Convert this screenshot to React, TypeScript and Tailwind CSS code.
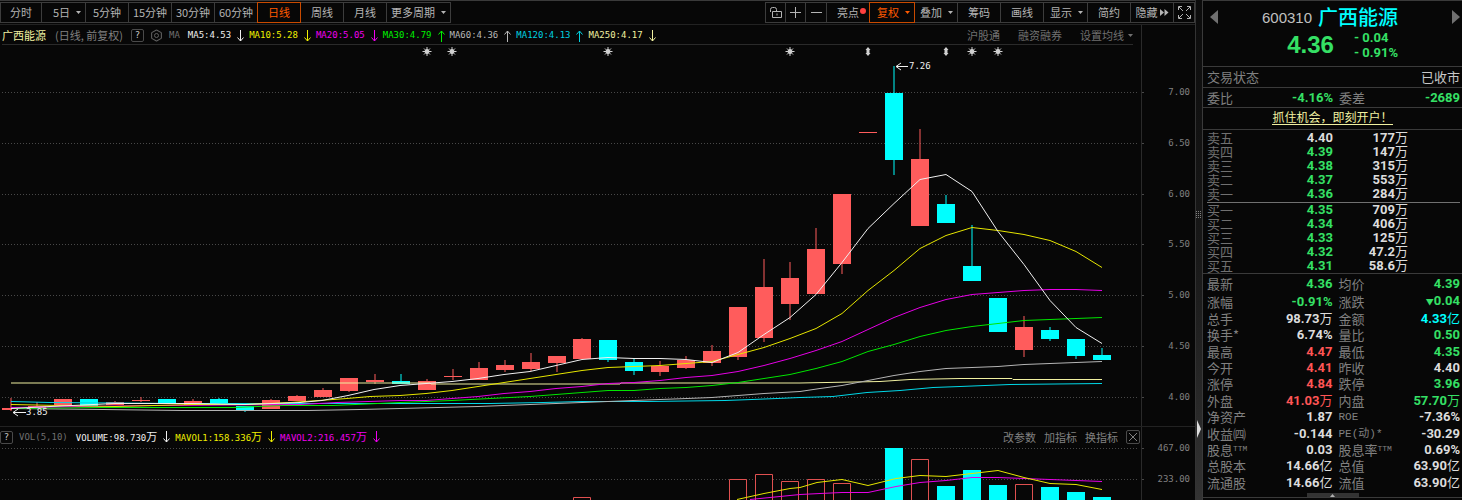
import React from 'react';
import { Hexagon } from 'lucide-react';

type Dir = 'up' | 'down';
type Candle = { d: Dir; top: number; bottom: number; high?: number; low?: number; vol?: number };
type Tone = 'g' | 'r' | 'w' | 'c';

const BODY = 18;
const cx = (i: number) => Math.round(11 + i * (1091 / 42));

const RED = '#ff5c5c';
const CYAN = '#00ffff';

const CANDLES: Candle[] = [
  { d: 'up', top: 408, bottom: 410, high: 398, low: 411 },
  { d: 'up', top: 406, bottom: 408, high: 402 },
  { d: 'up', top: 399, bottom: 405 },
  { d: 'down', top: 399, bottom: 406 },
  { d: 'up', top: 402, bottom: 405, high: 401 },
  { d: 'up', top: 400, bottom: 401, high: 397, low: 402 },
  { d: 'down', top: 399, bottom: 403 },
  { d: 'up', top: 401, bottom: 405, high: 399 },
  { d: 'down', top: 399, bottom: 403, high: 398 },
  { d: 'down', top: 406, bottom: 410, low: 412 },
  { d: 'up', top: 400, bottom: 409, high: 399 },
  { d: 'up', top: 396, bottom: 401, high: 395 },
  { d: 'up', top: 390, bottom: 397, high: 388 },
  { d: 'up', top: 378, bottom: 391, low: 392 },
  { d: 'up', top: 380, bottom: 382, high: 374, low: 384 },
  { d: 'down', top: 381, bottom: 384, high: 374 },
  { d: 'up', top: 381, bottom: 390, high: 379 },
  { d: 'up', top: 376, bottom: 377, high: 369, low: 380 },
  { d: 'up', top: 368, bottom: 380, high: 362 },
  { d: 'up', top: 365, bottom: 370, high: 360, low: 372 },
  { d: 'up', top: 362, bottom: 369, high: 353, low: 371 },
  { d: 'up', top: 356, bottom: 363, low: 372 },
  { d: 'up', top: 339, bottom: 359, high: 338, vol: 497 },
  { d: 'down', top: 340, bottom: 360, low: 362 },
  { d: 'down', top: 362, bottom: 371, high: 358, low: 375 },
  { d: 'up', top: 366, bottom: 372, high: 361, low: 376 },
  { d: 'up', top: 360, bottom: 368, high: 356, low: 369 },
  { d: 'up', top: 351, bottom: 363, high: 345, low: 366 },
  { d: 'up', top: 307, bottom: 357, low: 360, vol: 479 },
  { d: 'up', top: 287, bottom: 338, high: 259, low: 342, vol: 474 },
  { d: 'up', top: 278, bottom: 304, high: 262, low: 320, vol: 481 },
  { d: 'up', top: 249, bottom: 294, high: 228, vol: 479 },
  { d: 'up', top: 194, bottom: 264, low: 274, vol: 483 },
  { d: 'up', top: 132, bottom: 133 },
  { d: 'down', top: 93, bottom: 160, high: 66, low: 175, vol: 448 },
  { d: 'up', top: 159, bottom: 226, high: 129, vol: 459 },
  { d: 'down', top: 204, bottom: 223, high: 195, vol: 486 },
  { d: 'down', top: 266, bottom: 281, high: 225, vol: 470 },
  { d: 'down', top: 298, bottom: 332, vol: 485 },
  { d: 'up', top: 327, bottom: 350, high: 316, low: 357, vol: 484 },
  { d: 'down', top: 330, bottom: 339, high: 327, low: 341, vol: 487 },
  { d: 'down', top: 339, bottom: 356, low: 359, vol: 492 },
  { d: 'down', top: 355, bottom: 360, high: 348, vol: 497 },
];

const MA_LINES = [
  { color: '#f0f0a0', points: '11,382.5 430,382.5 431,383.5 620,383.5 621,382.5 800,382.5 880,381 910,379 960,378 1012,378 1013,379 1102,379' },
  { color: '#00d8e8', points: '11,401 50,402 180,403 400,403 490,403 543,402 582,401 647,401 725,400 752,399 777,398 800,397 833,396 867,392 900,390 933,387 960,386 1010,384 1102,383' },
  { color: '#b4b4b4', points: '11,408 103,409 182,410 308,410 360,409 400,408 438,407 478,406 530,404 582,402 608,401 633,400 687,398 712,397 738,395 764,393 800,391 820,388 842,385 868,380 894,375 920,371 946,368 972,367 998,366 1024,364 1050,363 1076,362 1102,361' },
  { color: '#00e600', points: '11,408 100,407 160,407 233,407 283,405 333,405 400,402 452,400 490,398 530,396 556,394 582,392 608,390 634,390 660,388 686,387 712,385 738,382 764,378 790,374 816,368 842,361 868,351 894,344 920,336 946,330 972,326 998,323 1024,320 1050,319 1076,318 1102,317' },
  { color: '#e600e6', points: '11,407 80,406 160,405 300,404 337,402 400,400 426,400 452,398 478,396 504,393 530,391 556,388 582,386 608,383 634,382 660,380 686,377 712,375 738,371 764,365 790,358 816,350 842,341 868,329 894,317 920,307 946,299 972,294 998,292 1024,290 1050,289 1076,289 1102,290' },
  { color: '#e6e600', points: '11,404 60,405 115,406 192,404 245,404 290,402 333,399 347,398 370,396 400,395 426,393 452,390 478,386 504,382 530,378 556,374 582,370 608,367 634,366 660,365 686,363 712,361 738,354 764,347 790,338 816,328 842,313 868,290 894,270 920,248 946,235 972,227 998,230 1024,234 1050,240 1076,251 1102,267' },
  { color: '#f0f0f0', points: '11,408 50,406 115,403 192,403 245,404 300,402 322,400 348,395 374,389 400,385 426,383 452,381 478,378 504,374 530,371 556,365 582,359 608,357 634,358 660,358 686,359 712,362 738,352 764,334 790,317 816,294 842,262 868,228 894,203 920,179 946,174 972,191 998,231 1024,264 1050,300 1076,327 1102,343' },
];

const VOL_LINES = [
  { color: '#e600e6', points: '750,499 800,494 820,493 842,492 868,492 896,486 920,482 946,480 972,477 998,477 1050,479 1076,480 1102,481' },
  { color: '#e6e600', points: '737,499 764,493 790,488 800,487 817,482 842,479 868,485 896,478 920,475 946,476 972,473 998,470 1024,477 1050,483 1076,484 1102,489' },
];

const PRICE_GRID: [string, number][] = [
  ['7.00', 92], ['6.50', 143], ['6.00', 194], ['5.50', 244], ['5.00', 295], ['4.50', 346], ['4.00', 397],
];
const VOL_GRID: [string, number][] = [['467.00', 448], ['233.00', 479]];

const STARS = [427, 452, 608, 790, 972, 998];
const DIAMONDS = [868, 946];

const PERIODS = [
  { label: '分时', w: 'w-[42px]' },
  { label: '5日', w: 'w-[45px]', caret: true },
  { label: '5分钟', w: 'w-11' },
  { label: '15分钟', w: 'w-11' },
  { label: '30分钟', w: 'w-11' },
  { label: '60分钟', w: 'w-11' },
  { label: '日线', w: 'w-11', active: true },
  { label: '周线', w: 'w-11' },
  { label: '月线', w: 'w-11' },
  { label: '更多周期', w: 'w-[65px]', caret: true },
];

const AVERAGES: { label: string; color: string; up?: boolean }[] = [
  { label: 'MA5:4.53', color: 'text-[#f0f0f0]' },
  { label: 'MA10:5.28', color: 'text-[#f0f000]' },
  { label: 'MA20:5.05', color: 'text-[#f000f0]' },
  { label: 'MA30:4.79', color: 'text-[#00f000]', up: true },
  { label: 'MA60:4.36', color: 'text-[#b8b8b8]', up: true },
  { label: 'MA120:4.13', color: 'text-[#00d0e0]', up: true },
  { label: 'MA250:4.17', color: 'text-[#f0f0a0]' },
];

const SELLS: [string, string, string, Tone][] = [
  ['卖五', '4.40', '177', 'w'],
  ['卖四', '4.39', '147', 'g'],
  ['卖三', '4.38', '315', 'g'],
  ['卖二', '4.37', '553', 'g'],
  ['卖一', '4.36', '284', 'g'],
];
const BUYS: [string, string, string, Tone][] = [
  ['买一', '4.35', '709', 'g'],
  ['买二', '4.34', '406', 'g'],
  ['买三', '4.33', '125', 'g'],
  ['买四', '4.32', '47.2', 'g'],
  ['买五', '4.31', '58.6', 'g'],
];

type Stat = { label: string; value: string; unit?: string; tone: Tone; sup?: string; latin?: boolean; falling?: boolean };
const STATS: [Stat, Stat][] = [
  [{ label: '最新', value: '4.36', tone: 'g' }, { label: '均价', value: '4.39', tone: 'g' }],
  [{ label: '涨幅', value: '-0.91%', tone: 'g' }, { label: '涨跌', value: '0.04', tone: 'g', falling: true }],
  [{ label: '总手', value: '98.73', unit: '万', tone: 'w' }, { label: '金额', value: '4.33', unit: '亿', tone: 'c' }],
  [{ label: '换手*', value: '6.74%', tone: 'w' }, { label: '量比', value: '0.50', tone: 'g' }],
  [{ label: '最高', value: '4.47', tone: 'r' }, { label: '最低', value: '4.35', tone: 'g' }],
  [{ label: '今开', value: '4.41', tone: 'r' }, { label: '昨收', value: '4.40', tone: 'w' }],
  [{ label: '涨停', value: '4.84', tone: 'r' }, { label: '跌停', value: '3.96', tone: 'g' }],
  [{ label: '外盘', value: '41.03', unit: '万', tone: 'r' }, { label: '内盘', value: '57.70', unit: '万', tone: 'g' }],
  [{ label: '净资产', value: '1.87', tone: 'w' }, { label: 'ROE', value: '-7.36%', tone: 'w', latin: true }],
  [{ label: '收益㈣', value: '-0.144', tone: 'w' }, { label: 'PE(动)*', value: '-30.29', tone: 'w', latin: true }],
  [{ label: '股息', sup: 'TTM', value: '0.03', tone: 'w' }, { label: '股息率', sup: 'TTM', value: '0.69%', tone: 'w' }],
  [{ label: '总股本', value: '14.66', unit: '亿', tone: 'w' }, { label: '总值', value: '63.90', unit: '亿', tone: 'w' }],
  [{ label: '流通股', value: '14.66', unit: '亿', tone: 'w' }, { label: '流值', value: '63.90', unit: '亿', tone: 'w' }],
];

const TONES: Record<Tone, string> = {
  g: 'text-[#35e065]',
  r: 'text-[#ff5555]',
  w: 'text-[#dcdcdc]',
  c: 'text-[#00ffff]',
};

const MONO = "font-['DejaVu_Sans_Mono','Noto_Sans_CJK_SC',monospace]";
const NUM = "font-['Roboto','Noto_Sans_CJK_SC',sans-serif] font-bold";

const Caret = () => (
  <svg viewBox="0 0 5 3" className="w-[5px] h-[3px] shrink-0" fill="currentColor"><path d="M0 0h5L2.5 3z" /></svg>
);

const Arrow: React.FC<{ up?: boolean }> = ({ up }) => (
  <svg viewBox="0 0 7 12" className={`w-[7px] h-3 shrink-0 ${up ? '' : 'rotate-180'}`} fill="none" stroke="currentColor">
    <path d="M3.5 12V1M.5 4.5l3-3.5 3 3.5" />
  </svg>
);

const ToolButton: React.FC<{
  w: string;
  label?: string;
  active?: boolean;
  caret?: boolean;
  children?: React.ReactNode;
}> = ({ w, label, active, caret, children }) => (
  <button
    className={`${w} h-[21px] -ml-px first:ml-0 shrink-0 relative flex items-center border whitespace-nowrap ${caret ? 'justify-end gap-1.5 pr-1' : 'justify-center'} ${active ? 'z-10 border-[#c84a00] text-[#ff5a00]' : 'border-[#3c3c3c] text-[#b4b4b4]'}`}
  >
    {label}
    {children}
    {caret && <Caret />}
  </button>
);

const HelpButton = () => (
  <button className={`w-[13px] h-[13px] shrink-0 flex items-center justify-center rounded-xs border border-[#4a4a4a] text-[#c8c8c8] text-[9px] ${MONO}`}>
    ?
  </button>
);

const Toolbar = () => (
  <div className="h-[25px] pt-px flex justify-between border-t border-b border-t-[#3a3a3a] border-b-[#222]">
    <div className="flex">
      {PERIODS.map((p) => (
        <ToolButton key={p.label} {...p} />
      ))}
    </div>
    <div className="flex">
      <ToolButton w="w-[21px]">
        <svg viewBox="0 0 14 13" className="w-3.5 h-[13px]" fill="none" stroke="currentColor">
          <path d="M3.5 11.5h9v-6h-9zM1.5 6V3.5q0-2 2-2h2q2 0 2 2v2M8 7.5v2" />
        </svg>
      </ToolButton>
      <ToolButton w="w-[21px]">
        <svg viewBox="0 0 11 11" className="w-[11px] h-[11px]" stroke="currentColor"><path d="M0 5.5h11M5.5 0v11" /></svg>
      </ToolButton>
      <ToolButton w="w-[22px]">
        <svg viewBox="0 0 11 11" className="w-[11px] h-[11px]" stroke="currentColor"><path d="M0 5.5h11" /></svg>
      </ToolButton>
      <ToolButton w="w-11" label="亮点">
        <span className="absolute right-[3px] top-[5px] w-1.5 h-1.5 rounded-full bg-[#ff4040]" />
      </ToolButton>
      <ToolButton w="w-[46px]" label="复权" active caret />
      <ToolButton w="w-11" label="叠加" caret />
      <ToolButton w="w-11" label="筹码" />
      <ToolButton w="w-11" label="画线" />
      <ToolButton w="w-[45px]" label="显示" caret />
      <ToolButton w="w-11" label="简约" />
      <ToolButton w="w-11" label="隐藏">
        <svg viewBox="0 0 9 7" className="ml-0.5 w-[9px] h-[7px]" fill="currentColor"><path d="M0 0l4 3.5L0 7zM4.5 0l4 3.5-4 3.5z" /></svg>
      </ToolButton>
      <ToolButton w="w-[22px]">
        <svg viewBox="0 0 13 13" className="w-[13px] h-[13px]" fill="none" stroke="currentColor">
          <path d="M.5 4V.5H4M9 .5h3.5V4M12.5 9v3.5H9M4 12.5H.5V9M1 1l4 4M12 1L8 5M12 12L8 8M1 12l4-4" />
        </svg>
      </ToolButton>
    </div>
  </div>
);

const IndicatorBar = () => (
  <div className="flex h-5">
    <div className="flex-1 pl-0.5 pr-2 border-r border-[#2a2a2a]">
      <div className="h-5 pt-0.5 flex items-center border-b border-[#2a2a2a] whitespace-nowrap">
        <span className="text-[#f0f0a0]">广西能源</span>
        <span className="ml-[9px] text-[#808080]">(日线, 前复权)</span>
        <span className="ml-2 flex items-center gap-1.5">
          <HelpButton />
          <button aria-label="设置" className="relative w-[13px] h-[13px] flex items-center justify-center text-[#606060]">
            <Hexagon className="w-[13px] h-[13px]" strokeWidth={2} />
            <span className="absolute w-[5px] h-[5px] rounded-full border border-[#606060]" />
          </button>
          <span className={`text-[9px] text-[#707070] ${MONO}`}>MA</span>
        </span>
        <span className={`ml-2 flex items-center gap-[5px] text-[9px] ${MONO}`}>
          {AVERAGES.map((m) => (
            <span key={m.label} className={`flex items-center gap-1.5 ${m.color}`}>
              {m.label}
              <Arrow up={m.up} />
            </span>
          ))}
        </span>
        <span className="ml-auto flex items-center gap-[18px] text-[#707070]">
          <a href="#hgt">沪股通</a>
          <a href="#rzrq">融资融券</a>
          <button className="flex items-center gap-1">设置均线 <Caret /></button>
        </span>
      </div>
    </div>
    <div className="w-[53px]" />
  </div>
);

const Grid: React.FC<{ rows: [string, number][] }> = ({ rows }) => (
  <>
    {rows.map(([label, y]) => (
      <g key={label}>
        <path d={`M2 ${y + 0.5}H1137`} stroke="#484848" strokeDasharray="1 2" />
        <path d={`M1141 ${y + 0.5}h3`} stroke="#484848" />
        <text x="1190" y={y + 3} textAnchor="end" fill="#808080" className={`text-[9px] ${MONO}`}>{label}</text>
      </g>
    ))}
  </>
);

const PriceChart = () => (
  <svg viewBox="0 45 1195 381" className="block w-full h-auto" fill="none">
    <Grid rows={PRICE_GRID} />
    <path d="M1141.5 45v381" stroke="#2a2a2a" />
    {STARS.map((x) => (
      <g key={x} stroke="#d0d0d0">
        <path d={`M${x} 47v9M${x - 4.5} 51.5h9M${x - 3} 48.5l6 6M${x + 3} 48.5l-6 6`} />
        <circle cx={x} cy="51.5" r="2" fill="#d0d0d0" />
      </g>
    ))}
    {DIAMONDS.map((x) => (
      <path key={x} d={`M${x} 47l2.5 3h-1v3h1l-2.5 3-2.5-3h1v-3h-1z`} fill="#d0d0d0" />
    ))}
    {CANDLES.map((c, i) => {
      const x = cx(i);
      const high = c.high ?? c.top;
      const low = c.low ?? c.bottom;
      return (
        <g key={i} fill={c.d === 'up' ? RED : CYAN}>
          <rect x={x - BODY / 2} y={c.top} width={i === 0 ? 10 : BODY} height={c.bottom - c.top} />
          <rect x={x - 0.5} y={high} width="1" height={low - high} />
        </g>
      );
    })}
    {MA_LINES.map((l) => (
      <polyline key={l.color} points={l.points} stroke={l.color} transform="translate(0 .5)" />
    ))}
    <path d="M908 66.5H896M901 63l-5 3.5 5 3.5" stroke="#f0f0f0" />
    <text x="909" y="69" fill="#f0f0f0" className={`text-[9px] ${MONO}`}>7.26</text>
    <path d="M26 412.5H13M18 409l-5 3.5 5 3.5" stroke="#f0f0f0" />
    <text x="26" y="415" fill="#f0f0f0" className={`text-[9px] ${MONO}`}>3.85</text>
  </svg>
);

const VolumeHeader = () => (
  <div className="flex h-5 border-t border-[#222]">
    <div className="flex-1 flex items-center pt-px pr-px border-r border-[#2a2a2a] whitespace-nowrap">
      <HelpButton />
      <span className={`ml-1.5 flex items-center text-[9px] ${MONO}`}>
        <span className="text-[#707070]">VOL(5,10)</span>
        <span className="ml-2 flex items-center gap-[5px]">
          <span className="flex items-center gap-1.5 text-[#f0f0f0]">
            <span>VOLUME:98.730<span className="text-[11px]">万</span></span>
            <Arrow />
          </span>
          <span className="flex items-center gap-1.5 text-[#f0f000]">
            <span>MAVOL1:158.336<span className="text-[11px]">万</span></span>
            <Arrow />
          </span>
          <span className="flex items-center gap-1.5 text-[#f000f0]">
            <span>MAVOL2:216.457<span className="text-[11px]">万</span></span>
            <Arrow />
          </span>
        </span>
      </span>
      <span className="ml-auto flex items-center gap-2 text-[#808080]">
        <button>改参数</button>
        <button>加指标</button>
        <button>换指标</button>
        <button aria-label="关闭" className="w-3.5 h-3.5 flex items-center justify-center rounded-xs border border-[#4a4a4a]">
          <svg viewBox="0 0 8 8" className="w-2 h-2" stroke="currentColor"><path d="M0 0l8 8M8 0L0 8" /></svg>
        </button>
      </span>
    </div>
    <div className="w-[53px]" />
  </div>
);

const VolumeChart = () => (
  <svg viewBox="0 446 1195 54" className="block w-full h-auto overflow-visible" fill="none">
    <Grid rows={VOL_GRID} />
    <path d="M1141.5 446v54" stroke="#2a2a2a" />
    {CANDLES.map((c, i) => {
      if (!c.vol) return null;
      const x = cx(i) - BODY / 2;
      return c.d === 'up' ? (
        <path key={i} d={`M${x + 0.5} 500V${c.vol + 0.5}h17V500`} stroke="#e05050" fill="#070707" />
      ) : (
        <rect key={i} x={x} y={c.vol} width={BODY} height={500 - c.vol} fill={CYAN} />
      );
    })}
    {VOL_LINES.map((l) => (
      <polyline key={l.color} points={l.points} stroke={l.color} transform="translate(0 .5)" />
    ))}
  </svg>
);

const Splitter = () => (
  <div className="w-[7px] shrink-0 relative border-l border-[#333] bg-linear-to-b from-[#0c0c0c] via-[#181818] to-[#333]">
    <svg viewBox="0 0 5 8" className="absolute left-0 top-[211px] w-[5px] h-2" fill="#808080">
      <path d="M0 0h1v1H0zM2 0h1v1H2zM4 0h1v1H4zM0 2h1v1H0zM2 2h1v1H2zM4 2h1v1H4zM0 4h1v1H0zM2 4h1v1H2zM4 4h1v1H4zM0 6h1v1H0zM2 6h1v1H2zM4 6h1v1H4z" />
    </svg>
    <svg viewBox="0 0 4 18" className="absolute left-px top-[420px] w-1 h-[18px]" fill="#dcdcdc"><path d="M0 0l4 9-4 9z" /></svg>
  </div>
);

const OrderTable: React.FC<{ rows: [string, string, string, Tone][] }> = ({ rows }) => (
  <table className="w-full h-[70px] leading-[14px]">
    <tbody>
      {rows.map(([label, price, vol, tone]) => (
        <tr key={label}>
          <th className="p-0 w-[60px] text-left font-normal text-[#707070]">{label}</th>
          <td className={`p-0 w-[66px] text-right ${NUM} ${TONES[tone]}`}>{price}</td>
          <td className={`p-0 w-[75px] text-right text-[#dcdcdc] ${NUM}`}>{vol}<span className="font-normal">万</span></td>
          <td className="p-0" />
        </tr>
      ))}
    </tbody>
  </table>
);

const StatLabel: React.FC<{ s: Stat; className: string }> = ({ s, className }) => (
  <th className={`p-0 text-left font-normal whitespace-nowrap text-[#808080] ${className} ${s.latin ? "text-[11px] font-['Liberation_Mono','Noto_Sans_CJK_SC',monospace]" : ''}`}>
    {s.label}
    {s.sup && <sup className="text-[8px] leading-none font-['Liberation_Mono',monospace]">{s.sup}</sup>}
  </th>
);

const StatValue: React.FC<{ s: Stat }> = ({ s }) => (
  <td className={`p-0 text-right ${NUM} ${TONES[s.tone]}`}>
    {s.falling && <span className="text-[8px]">▼</span>}
    {s.value}
    {s.unit && <span className="font-normal">{s.unit}</span>}
  </td>
);

const QuotePanel = () => (
  <aside className="w-[260px] shrink-0 flex flex-col border-l border-t border-[#3a3a3a] text-[13px]">
    <div className="h-[65px] pl-[7px] pr-0.5 pt-1 flex justify-between">
      <button aria-label="上一只" className="h-6 flex items-center text-[#707070]">
        <svg viewBox="0 0 8 14" className="w-2 h-3.5" fill="currentColor"><path d="M8 0v14L0 7z" /></svg>
      </button>
      <div className="mr-2.5 flex flex-col items-end">
        <h1 className="h-6 flex items-center gap-1.5">
          <span className="text-[15px] text-[#c0c0c0] font-['Liberation_Sans',sans-serif]">600310</span>
          <span className="text-xl leading-6 font-medium text-[#00ffff]">广西能源</span>
        </h1>
        <div className={`flex items-center gap-5 ${TONES.g}`}>
          <span className="text-2xl leading-8 font-bold font-['Liberation_Sans',sans-serif]">4.36</span>
          <span className={`leading-[15px] ${NUM}`}>
            <span className="block">- 0.04</span>
            <span className="block">- 0.91%</span>
          </span>
        </div>
      </div>
      <button aria-label="下一只" className="h-6 flex items-center text-[#707070]">
        <svg viewBox="0 0 8 14" className="w-2 h-3.5" fill="currentColor"><path d="M0 0v14l8-7z" /></svg>
      </button>
    </div>
    <div className="h-[21px] pl-1 pr-0.5 pb-0.5 flex items-center justify-between border-t border-[#3a3a3a]">
      <span className="text-[#808080]">交易状态</span>
      <span className="text-[#c8c8c8]">已收市</span>
    </div>
    <div className="h-5 pl-1 pr-0.5 flex items-center border-t border-[#3a3a3a]">
      <span className="w-10 text-[#808080]">委比</span>
      <span className={`w-[86px] text-right ${NUM} ${TONES.g}`}>-4.16%</span>
      <span className="ml-1.5 text-[#808080]">委差</span>
      <span className={`ml-auto ${NUM} ${TONES.g}`}>-2689</span>
    </div>
    <div className="h-[22px] pb-0.5 flex items-center justify-center border-t border-[#3a3a3a]">
      <a href="#open" className="text-xs leading-[14px] text-[#f0f0a0] border-b border-[#f0f0a0]">抓住机会，即刻开户！</a>
    </div>
    <div className="pl-1 pr-0.5 pt-px border-t border-[#3a3a3a]">
      <OrderTable rows={SELLS} />
      <div className="mt-px border-t border-[#707070]" />
      <OrderTable rows={BUYS} />
    </div>
    <div className="pl-1 pr-0.5 pt-0.5 border-t border-[#3a3a3a]">
      <table className="w-full h-[215px] leading-4 table-fixed">
        <tbody>
          {STATS.map(([a, b]) => (
            <tr key={a.label}>
              <StatLabel s={a} className="w-[60px]" />
              <StatValue s={a} />
              <StatLabel s={b} className="w-[62px] pl-1.5" />
              <StatValue s={b} />
            </tr>
          ))}
        </tbody>
      </table>
    </div>
    <div className="pt-0.5 flex justify-center border-b border-[#3a3a3a]">
      <button aria-label="展开" className="w-[52px] h-1 flex items-center justify-center bg-[#333] text-[#b0b0b0]">
        <svg viewBox="0 0 5 3" className="w-[5px] h-[3px]" fill="currentColor"><path d="M2.5 0L5 3H0z" /></svg>
      </button>
    </div>
  </aside>
);

const App: React.FC = () => {
  return (
    <div className="min-h-screen flex bg-[#070707] text-[11px] leading-none font-['Noto_Sans_CJK_SC','Liberation_Sans',sans-serif] overflow-hidden">
      <main className="flex-1 min-w-0">
        <Toolbar />
        <IndicatorBar />
        <PriceChart />
        <VolumeHeader />
        <VolumeChart />
      </main>
      <Splitter />
      <QuotePanel />
    </div>
  );
};

export default App;
